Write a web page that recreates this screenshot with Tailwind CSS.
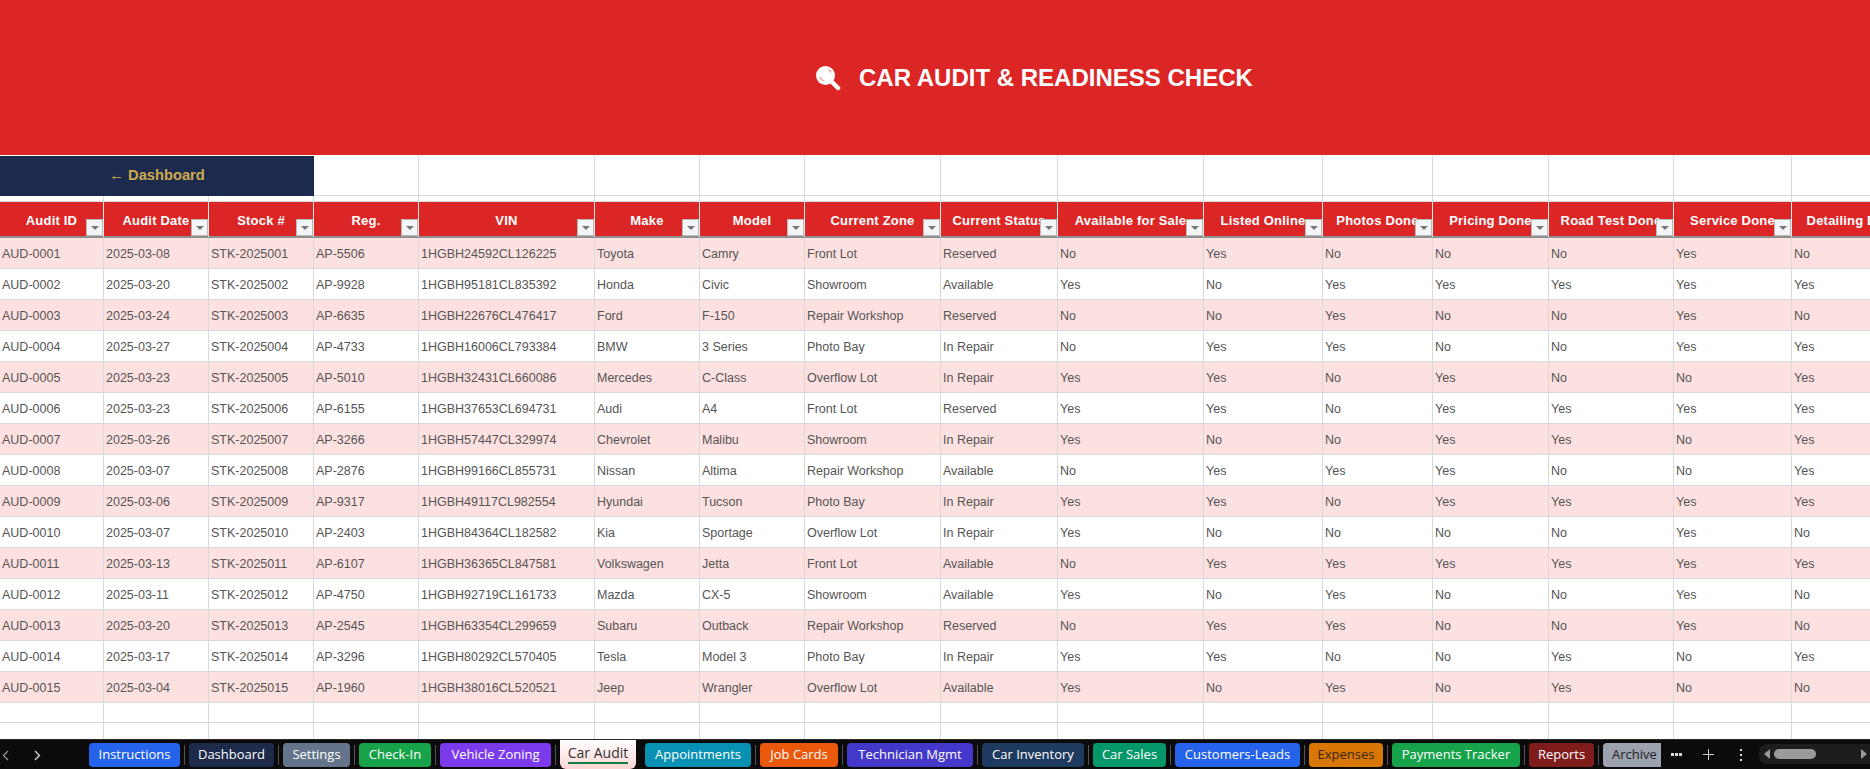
<!DOCTYPE html>
<html lang="en">
<head>
    <meta charset="UTF-8">
    <title>Car Audit</title>
    <script src="https://cdn.jsdelivr.net/npm/@tailwindcss/browser@4"></script>
</head>
<body class="bg-white">
<div class="h-[769px] w-[1870px] flex flex-col overflow-hidden font-['Liberation_Sans',Arial,sans-serif]">

    <!-- title banner -->
    <div class="h-[155px] shrink-0 bg-[#dc2626] flex items-center pl-[815px] gap-[18px]">
        <svg class="w-[26px] h-[26px]" viewBox="0 0 26 26">
            <line x1="15" y1="15" x2="23" y2="23" stroke="#fff" stroke-width="4.500" stroke-linecap="round"/>
            <circle cx="10.500" cy="10.500" r="9.500" fill="#fff"/>
            <path d="M5 12a6 6 0 0 0 4 4M13 4.500a6 6 0 0 1 3 3" fill="none" stroke="#f09a9a" stroke-width="1.300"/>
        </svg>
        <h1 class="text-[24px] font-bold text-white leading-none">CAR AUDIT &amp; READINESS CHECK</h1>
    </div>

    <!-- sheet -->
    <div class="flex-1 overflow-hidden border-t border-white">
        <table id="sheet" class="table-fixed border-separate border-spacing-0 w-[1916px] text-[12.5px] text-[#555]">
            <colgroup>
                <col class="w-[104px]"><col class="w-[105px]"><col class="w-[105px]"><col class="w-[105px]"><col class="w-[176px]">
                <col class="w-[105px]"><col class="w-[105px]"><col class="w-[136px]"><col class="w-[117px]"><col class="w-[146px]">
                <col class="w-[119px]"><col class="w-[110px]"><col class="w-[116px]"><col class="w-[125px]"><col class="w-[118px]"><col class="w-[124px]">
            </colgroup>
            <thead id="head"></thead>
            <tbody id="rows"></tbody>
        </table>
    </div>

    <!-- sheet tabs -->
    <div class="h-[30px] shrink-0 bg-[#0b0b0b] border-t border-[#2a2a2a] flex text-[13px] font-['Open_Sans',sans-serif] text-white">
        <div class="w-[89px] shrink-0 relative text-[#bdbdbd]">
            <svg class="absolute left-[2px] top-[10px] w-[7px] h-[11px]" viewBox="0 0 7 11"><path d="M6 1 1.500 5.500 6 10" fill="none" stroke="#9a9a9a" stroke-width="1.200"/></svg>
            <svg class="absolute left-[34px] top-[10px] w-[7px] h-[11px]" viewBox="0 0 7 11"><path d="M1 1 5.500 5.500 1 10" fill="none" stroke="#e5e5e5" stroke-width="1.200"/></svg>
        </div>
        <div class="w-[1572px] shrink-0 overflow-hidden flex items-start gap-[4px]">
            <div class="w-[91px] h-[24px] mt-[3px] shrink-0 rounded-[4px] bg-[#2563eb] flex items-center justify-center">Instructions</div>
            <div class="w-px h-[20px] mt-[5px] shrink-0 bg-[#555]"></div>
            <div class="w-[85px] h-[24px] mt-[3px] shrink-0 rounded-[4px] bg-[#1e2a4a] flex items-center justify-center">Dashboard</div>
            <div class="w-px h-[20px] mt-[5px] shrink-0 bg-[#555]"></div>
            <div class="w-[67px] h-[24px] mt-[3px] shrink-0 rounded-[4px] bg-[#64748b] flex items-center justify-center">Settings</div>
            <div class="w-px h-[20px] mt-[5px] shrink-0 bg-[#555]"></div>
            <div class="w-[72px] h-[24px] mt-[3px] shrink-0 rounded-[4px] bg-[#16a34a] flex items-center justify-center">Check-In</div>
            <div class="w-px h-[20px] mt-[5px] shrink-0 bg-[#555]"></div>
            <div class="w-[111px] h-[24px] mt-[3px] shrink-0 rounded-[4px] bg-[#7c3aed] flex items-center justify-center">Vehicle Zoning</div>
            <div class="w-px h-[20px] mt-[5px] shrink-0 bg-[#555]"></div>
            <div class="w-[76px] h-[29px] shrink-0 rounded-b-[6px] bg-gradient-to-b from-white to-[#fbd5d5] text-[14px] text-[#333] relative flex justify-center pt-[2px]">Car Audit<span class="absolute left-[8px] right-[8px] bottom-[5px] h-[2px] bg-[#15803d]"></span></div>
            <div class="w-px h-[20px] mt-[5px] shrink-0 bg-[#0b0b0b]"></div>
            <div class="w-[106px] h-[24px] mt-[3px] shrink-0 rounded-[4px] bg-[#0891b2] flex items-center justify-center">Appointments</div>
            <div class="w-px h-[20px] mt-[5px] shrink-0 bg-[#555]"></div>
            <div class="w-[78px] h-[24px] mt-[3px] shrink-0 rounded-[4px] bg-[#ea580c] flex items-center justify-center">Job Cards</div>
            <div class="w-px h-[20px] mt-[5px] shrink-0 bg-[#555]"></div>
            <div class="w-[126px] h-[24px] mt-[3px] shrink-0 rounded-[4px] bg-[#4338ca] flex items-center justify-center">Technician Mgmt</div>
            <div class="w-px h-[20px] mt-[5px] shrink-0 bg-[#555]"></div>
            <div class="w-[102px] h-[24px] mt-[3px] shrink-0 rounded-[4px] bg-[#1e3a5f] flex items-center justify-center">Car Inventory</div>
            <div class="w-px h-[20px] mt-[5px] shrink-0 bg-[#555]"></div>
            <div class="w-[73px] h-[24px] mt-[3px] shrink-0 rounded-[4px] bg-[#059669] flex items-center justify-center">Car Sales</div>
            <div class="w-px h-[20px] mt-[5px] shrink-0 bg-[#555]"></div>
            <div class="w-[125px] h-[24px] mt-[3px] shrink-0 rounded-[4px] bg-[#2563eb] flex items-center justify-center">Customers-Leads</div>
            <div class="w-px h-[20px] mt-[5px] shrink-0 bg-[#555]"></div>
            <div class="w-[74px] h-[24px] mt-[3px] shrink-0 rounded-[4px] bg-[#d97706] text-[#3a2505] flex items-center justify-center">Expenses</div>
            <div class="w-px h-[20px] mt-[5px] shrink-0 bg-[#555]"></div>
            <div class="w-[128px] h-[24px] mt-[3px] shrink-0 rounded-[4px] bg-[#16a34a] flex items-center justify-center">Payments Tracker</div>
            <div class="w-px h-[20px] mt-[5px] shrink-0 bg-[#555]"></div>
            <div class="w-[65px] h-[24px] mt-[3px] shrink-0 rounded-[4px] bg-[#7f1d1d] flex items-center justify-center">Reports</div>
            <div class="w-px h-[20px] mt-[5px] shrink-0 bg-[#555]"></div>
            <div class="w-[66px] h-[24px] mt-[3px] shrink-0 rounded-l-[4px] bg-[#9ca3af] text-[#222] flex items-center pl-[9px]">Archive</div>
        </div>
        <div class="flex-1 relative">
            <div class="absolute left-[10px] top-[13px] flex gap-px"><i class="w-[3px] h-[3px] bg-[#ddd]"></i><i class="w-[3px] h-[3px] bg-[#ddd]"></i><i class="w-[3px] h-[3px] bg-[#ddd]"></i></div>
            <svg class="absolute left-[42px] top-[9px] w-[11px] h-[11px]" viewBox="0 0 11 11"><path d="M5.500 0v11M0 5.500h11" stroke="#ccc" stroke-width="1"/></svg>
            <div class="absolute left-[79px] top-[9px] flex flex-col gap-[3px]"><i class="w-[2px] h-[2px] bg-[#ddd]"></i><i class="w-[2px] h-[2px] bg-[#ddd]"></i><i class="w-[2px] h-[2px] bg-[#ddd]"></i></div>
            <div class="absolute left-[98px] right-0 top-[4px] h-[20px] bg-[#1d1d1d] rounded-l-[8px]">
                <span class="absolute left-[5px] top-[5px] w-0 h-0 border-y-[5px] border-y-transparent border-r-[6px] border-r-[#9a9a9a]"></span>
                <span class="absolute left-[15px] top-[5px] w-[42px] h-[10px] rounded-[5px] bg-[#9a9a9a]"></span>
                <span class="absolute right-[3px] top-[5px] w-0 h-0 border-y-[5px] border-y-transparent border-l-[6px] border-l-[#9a9a9a]"></span>
            </div>
        </div>
    </div>
</div>

<script>
    const columns = ["Audit ID", "Audit Date", "Stock #", "Reg.", "VIN", "Make", "Model", "Current Zone", "Current Status", "Available for Sale", "Listed Online", "Photos Done", "Pricing Done", "Road Test Done", "Service Done", "Detailing Done"];

    const audits = [
        ["2025-03-08", "AP-5506", "1HGBH24592CL126225", "Toyota", "Camry", "Front Lot", "Reserved", "No", "Yes", "No", "No", "No", "Yes", "No"],
        ["2025-03-20", "AP-9928", "1HGBH95181CL835392", "Honda", "Civic", "Showroom", "Available", "Yes", "No", "Yes", "Yes", "Yes", "Yes", "Yes"],
        ["2025-03-24", "AP-6635", "1HGBH22676CL476417", "Ford", "F-150", "Repair Workshop", "Reserved", "No", "No", "Yes", "No", "No", "Yes", "No"],
        ["2025-03-27", "AP-4733", "1HGBH16006CL793384", "BMW", "3 Series", "Photo Bay", "In Repair", "No", "Yes", "Yes", "No", "No", "Yes", "Yes"],
        ["2025-03-23", "AP-5010", "1HGBH32431CL660086", "Mercedes", "C-Class", "Overflow Lot", "In Repair", "Yes", "Yes", "No", "Yes", "No", "No", "Yes"],
        ["2025-03-23", "AP-6155", "1HGBH37653CL694731", "Audi", "A4", "Front Lot", "Reserved", "Yes", "Yes", "No", "Yes", "Yes", "Yes", "Yes"],
        ["2025-03-26", "AP-3266", "1HGBH57447CL329974", "Chevrolet", "Malibu", "Showroom", "In Repair", "Yes", "No", "No", "Yes", "Yes", "No", "Yes"],
        ["2025-03-07", "AP-2876", "1HGBH99166CL855731", "Nissan", "Altima", "Repair Workshop", "Available", "No", "Yes", "Yes", "Yes", "No", "No", "Yes"],
        ["2025-03-06", "AP-9317", "1HGBH49117CL982554", "Hyundai", "Tucson", "Photo Bay", "In Repair", "Yes", "Yes", "No", "Yes", "Yes", "Yes", "Yes"],
        ["2025-03-07", "AP-2403", "1HGBH84364CL182582", "Kia", "Sportage", "Overflow Lot", "In Repair", "Yes", "No", "No", "No", "No", "Yes", "No"],
        ["2025-03-13", "AP-6107", "1HGBH36365CL847581", "Volkswagen", "Jetta", "Front Lot", "Available", "No", "Yes", "Yes", "Yes", "Yes", "Yes", "Yes"],
        ["2025-03-11", "AP-4750", "1HGBH92719CL161733", "Mazda", "CX-5", "Showroom", "Available", "Yes", "No", "Yes", "No", "No", "Yes", "No"],
        ["2025-03-20", "AP-2545", "1HGBH63354CL299659", "Subaru", "Outback", "Repair Workshop", "Reserved", "No", "Yes", "Yes", "No", "No", "Yes", "No"],
        ["2025-03-17", "AP-3296", "1HGBH80292CL570405", "Tesla", "Model 3", "Photo Bay", "In Repair", "Yes", "Yes", "No", "No", "Yes", "No", "Yes"],
        ["2025-03-04", "AP-1960", "1HGBH38016CL520521", "Jeep", "Wrangler", "Overflow Lot", "Available", "Yes", "No", "Yes", "No", "Yes", "No", "No"]
    ];

    const gridCell = "border-r border-b border-[#d6dadd] p-0";
    const blankCells = (from) => columns.slice(from).map(() => `<td class="${gridCell}"></td>`).join("");

    // link row, thin spacer row, then the red filter header
    document.getElementById("head").innerHTML = `
        <tr class="h-[40px]">
            <td colspan="3" class="p-0 pb-[2px] bg-[#1c2b4d] text-[#cfaa4f] text-[14.7px] font-bold text-center">← Dashboard</td>
            ${blankCells(3)}
        </tr>
        <tr class="h-[6px]">${blankCells(0)}</tr>
        <tr class="h-[36px]">${columns.map((name) => `
            <th class="relative p-0 pt-[3px] bg-[#dc2626] border-r border-r-[#e9e9e9] border-b-2 border-b-[#8f8f8f] text-white text-[13px] font-bold text-center overflow-hidden whitespace-nowrap tracking-[0.2px]">
                ${name}
                <span class="absolute right-0 bottom-0 w-[17px] h-[17px] bg-[#f4f5f7] border border-[#b9b9b9] flex items-center justify-center">
                    <svg class="w-[8px] h-[4px]" viewBox="0 0 8 4"><path d="M0 0h8L4 4z" fill="#777"/></svg>
                </span>
            </th>`).join("")}</tr>`;

    const auditRows = audits.map((row, i) => {
        const num = String(i + 1);
        const cells = [`AUD-${num.padStart(4, "0")}`, row[0], `STK-${2025000 + i + 1}`, ...row.slice(1)];
        const bg = i % 2 === 0 ? "bg-[#fde0e0]" : "bg-white";
        return `<tr class="h-[31px] ${bg}">${cells.map((c) => `<td class="${gridCell} pl-[2px] pt-[2px] whitespace-nowrap overflow-hidden">${c}</td>`).join("")}</tr>`;
    }).join("");

    document.getElementById("rows").innerHTML = auditRows +
        `<tr class="h-[20px]">${blankCells(0)}</tr><tr class="h-[20px]">${blankCells(0)}</tr>`;
</script>
</body>
</html>
